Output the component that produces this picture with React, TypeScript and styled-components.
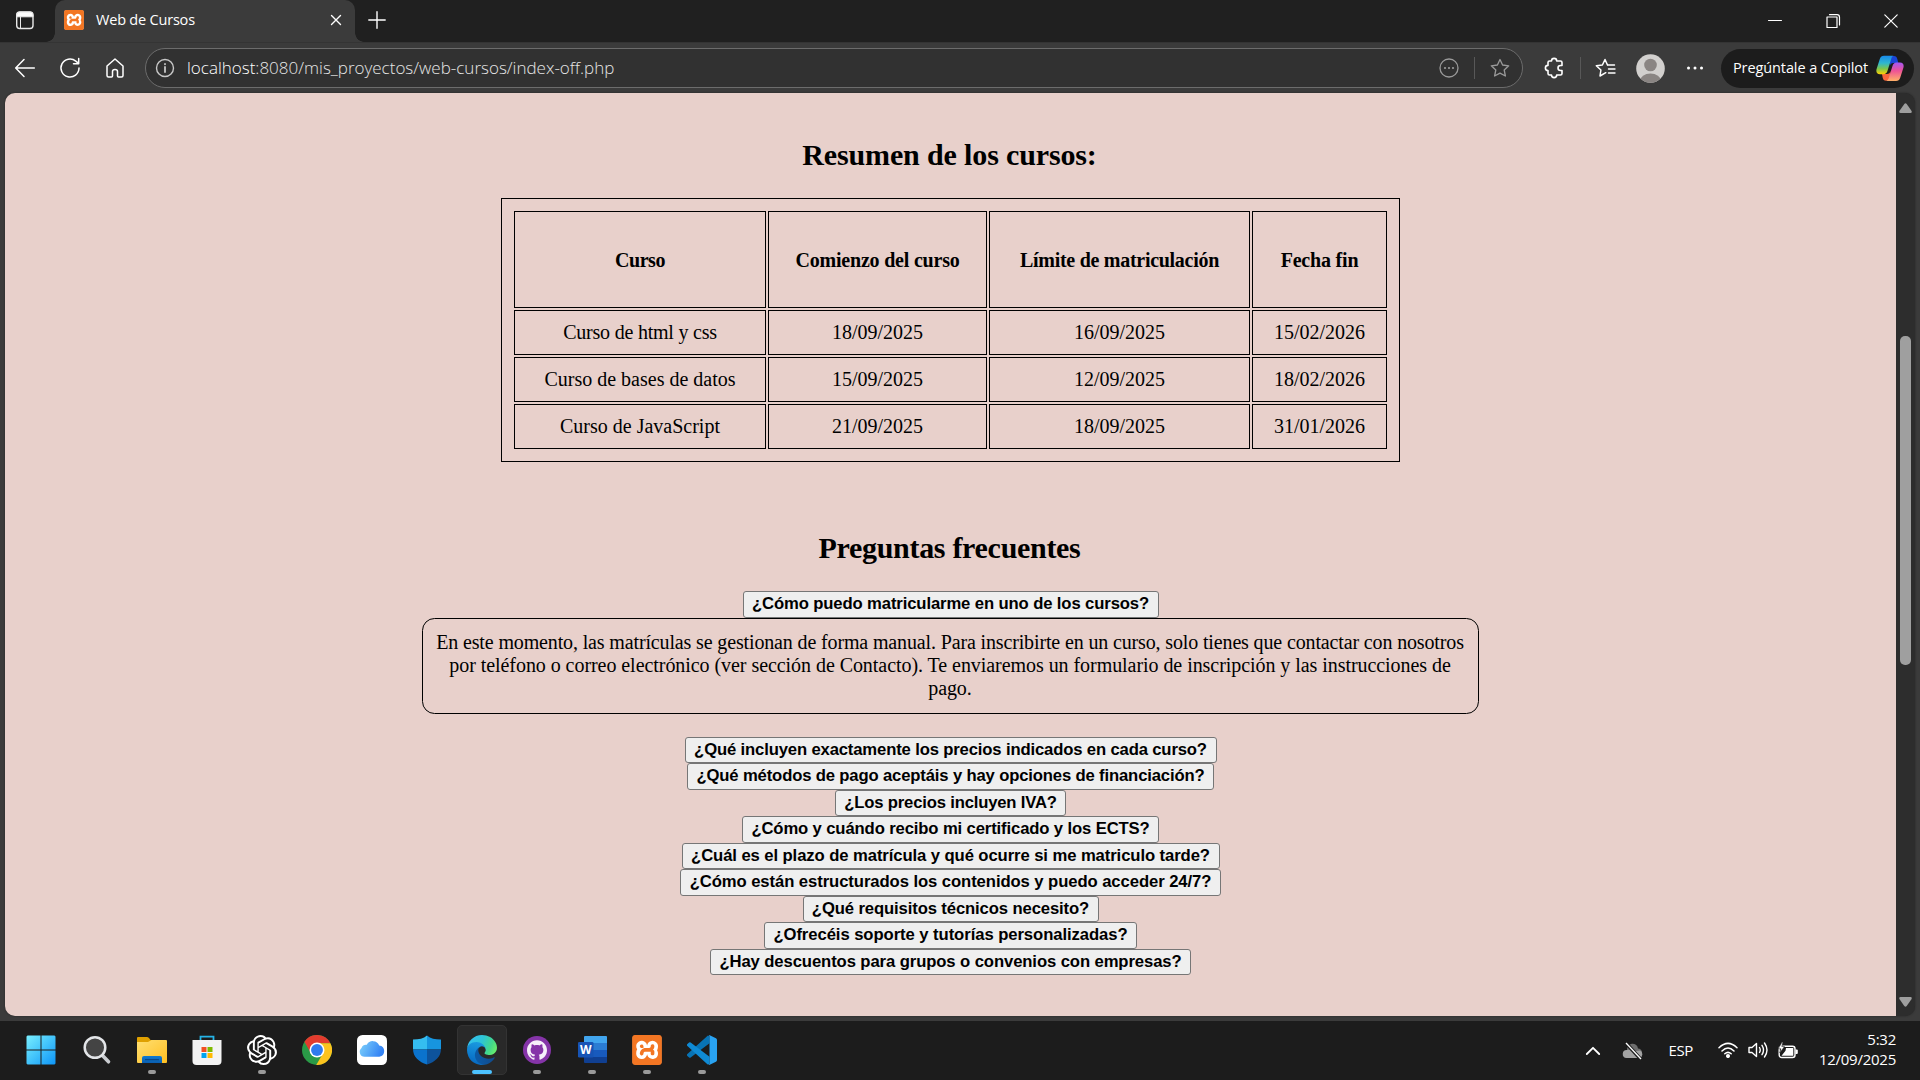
import React from 'react';
import styled, { createGlobalStyle, css } from 'styled-components';
import { SiGithub, SiOpenai, SiXampp } from 'react-icons/si';

const GlobalStyle = createGlobalStyle`
  * { box-sizing: border-box; }
  html, body { margin: 0; padding: 0; background: #3b3b3b; overflow: hidden; }
  svg { display: block; flex: none; }
`;

const uiFont = "'Open Sans', 'Noto Sans', sans-serif";
const serif = "'Liberation Serif', 'Times New Roman', serif";

const Screen = styled.div`
  width: 1920px;
  height: 1080px;
  display: flex;
  flex-direction: column;
  background: #3b3b3b;
  overflow: hidden;
`;

/* ---------- Browser chrome ---------- */

const TitleBar = styled.header`
  height: 42px;
  display: flex;
  align-items: stretch;
  background: #202020;
  color: #fff;
`;

const TabActions = styled.div`
  width: 55px;
  padding: 11px 0 0 15px;
`;

const Tab = styled.div`
  position: relative;
  width: 300px;
  display: flex;
  align-items: center;
  padding: 0 13px 2px 9px;
  background: #3b3b3b;
  border-radius: 10px 10px 0 0;
  &::before,
  &::after {
    content: '';
    position: absolute;
    bottom: 0;
    width: 9px;
    height: 9px;
  }
  &::before {
    left: -9px;
    background: radial-gradient(circle at 0 0, #202020 8.5px, #3b3b3b 9px);
  }
  &::after {
    right: -9px;
    background: radial-gradient(circle at 100% 0, #202020 8.5px, #3b3b3b 9px);
  }
`;

const TabTitle = styled.span`
  flex: 1;
  margin-left: 12px;
  padding-bottom: 1px;
  font: 400 14.5px/20px ${uiFont};
  letter-spacing: -0.2px;
`;

const NewTab = styled.div`
  padding: 11px 0 0 13px;
`;

const WindowControls = styled.div`
  display: flex;
  align-items: center;
  gap: 42px;
  margin-left: auto;
  padding: 0 21px 0 0;
`;

const Toolbar = styled.nav`
  height: 51px;
  display: flex;
  align-items: center;
  padding: 0 6px 0 14px;
  border-top: 1px solid #343434;
`;

const NavButtons = styled.div`
  display: flex;
  gap: 23px;
  width: 131px;
`;

const AddressBar = styled.div`
  width: 1378px;
  height: 40px;
  display: flex;
  align-items: center;
  padding: 0 12px 0 9px;
  background: #313131;
  border: 1px solid #6c6c6c;
  border-radius: 20px;
`;

const Url = styled.span`
  flex: 1;
  margin-left: 12px;
  color: #e6e6e6;
  font: 300 17px/24px ${uiFont};
`;

const Host = styled.span`
  color: #fff;
`;

const Divider = styled.span<{ $gap?: number }>`
  width: 1px;
  height: 22px;
  margin: 0 ${(p) => p.$gap ?? 15}px;
  background: #585858;
`;

const ToolActions = styled.div`
  display: flex;
  align-items: center;
  margin-left: 20px;
`;

const Avatar = styled.div`
  margin: 0 21px 0 20px;
`;

const CopilotButton = styled.div`
  display: flex;
  align-items: center;
  justify-content: space-between;
  width: 193px;
  height: 39px;
  margin-left: auto;
  padding: 0 10px 0 12px;
  border-radius: 20px;
  background: #1c1c1c;
  color: #fff;
  font: 400 14.5px/20px ${uiFont};
  letter-spacing: -0.1px;
`;

/* ---------- Web page ---------- */

const Viewport = styled.div`
  display: flex;
  width: 1910px;
  height: 923px;
  margin-left: 5px;
  border-radius: 10px;
  overflow: hidden;
  background: #2d2d2d;
  box-shadow: 0 0 2px #222;
`;

const Page = styled.main`
  width: 1891px;
  display: flex;
  flex-direction: column;
  align-items: center;
  background: #e8d0cb;
  color: #000;
  font-family: ${serif};
  font-size: 20px;
`;

const Heading = styled.h2<{ $top: number; $tracking: number }>`
  margin: ${(p) => p.$top}px 0 0;
  padding-right: 2px;
  font-size: 30px;
  line-height: 34px;
  font-weight: bold;
  letter-spacing: ${(p) => p.$tracking}px;
`;

const CourseTable = styled.table`
  width: 899px;
  height: 264px;
  margin: 26px 0 0;
  padding: 10px;
  border: 1px solid #000;
  border-collapse: separate;
  border-spacing: 2px;
  table-layout: fixed;
  text-align: center;
`;

const cell = css<{ $tracking?: number }>`
  padding: 0;
  border: 1px solid #000;
  line-height: 23px;
  letter-spacing: ${(p) => p.$tracking ?? 0}px;
`;

const HeadCell = styled.th<{ $tracking?: number; $width: number }>`
  ${cell}
  padding-top: 1px;
  width: ${(p) => p.$width}px;
  height: 97px;
`;

const Cell = styled.td<{ $tracking?: number }>`
  ${cell}
  height: 45px;
`;

const QuestionButton = styled.button<{ $width: number; $tracking: number }>`
  display: block;
  width: ${(p) => p.$width}px;
  height: 26.5px;
  padding: 0;
  border: 1px solid #767676;
  border-radius: 3px;
  background: #efefef;
  color: #000;
  font: bold 16.667px/20px 'Liberation Sans', Arial, sans-serif;
  letter-spacing: ${(p) => p.$tracking}px;
  white-space: nowrap;
  text-align: center;
`;

const Faq = styled.section`
  display: flex;
  flex-direction: column;
  align-items: center;
  margin-top: 26px;
`;

const Answer = styled.div`
  width: 1057px;
  height: 96px;
  margin-bottom: 23px;
  padding: 12px 1px 0 0;
  border: 1px solid #000;
  border-radius: 12.5px;
  text-align: center;
`;

const AnswerLine = styled.span<{ $tracking: number }>`
  display: block;
  line-height: 23.2px;
  white-space: nowrap;
  letter-spacing: ${(p) => p.$tracking}px;
`;

const Scrollbar = styled.div`
  width: 19px;
  display: flex;
  flex-direction: column;
  align-items: center;
  padding: 10px 1px 9px 0;
`;

const Thumb = styled.div`
  width: 11px;
  height: 329px;
  margin: 223px 0 auto;
  border-radius: 5px;
  background: #9f9f9f;
`;

/* ---------- Taskbar ---------- */

const Taskbar = styled.footer`
  display: flex;
  height: 59px;
  margin-top: auto;
  padding: 0 24px 0 13px;
  background: #1c1c1c;
  color: #fff;
`;

const AppSlot = styled.div`
  width: 55px;
  display: flex;
  justify-content: center;
  padding-top: 4px;
  &:first-child {
    width: 56px;
  }
`;

const AppTile = styled.div<{ $active?: boolean }>`
  width: 50px;
  height: 50px;
  display: flex;
  flex-direction: column;
  align-items: center;
  justify-content: space-between;
  padding: 9px 0 0;
  border: 1px solid ${(p) => (p.$active ? '#333' : 'transparent')};
  border-radius: 5px;
  background: ${(p) => (p.$active ? '#292929' : 'transparent')};
`;

const Indicator = styled.i<{ $state: 'none' | 'open' | 'active' }>`
  height: 4px;
  width: ${(p) => (p.$state === 'active' ? 20 : 8)}px;
  border-radius: 2px;
  background: ${(p) => ({ none: 'transparent', open: '#9a9a9a', active: '#4cc2ff' })[p.$state]};
`;

const Tray = styled.div`
  display: flex;
  align-items: center;
  margin-left: auto;
  font: 400 15px/20px ${uiFont};
`;

const HiddenIcons = styled.div`
  display: flex;
  align-items: center;
  gap: 21px;
`;

const Language = styled.span`
  margin: 0 25px 2px 25px;
  letter-spacing: -0.4px;
`;

const StatusIcons = styled.div`
  display: flex;
  gap: 10px;
`;

const Clock = styled.div`
  width: 98px;
  padding-bottom: 4px;
  text-align: right;
  letter-spacing: -0.25px;
`;

/* ---------- Icons ---------- */

const Line = ({ w, h, sw = 1.5, color = '#fff', children }: { w: number; h: number; sw?: number; color?: string; children: React.ReactNode }) => (
  <svg width={w} height={h} viewBox={`0 0 ${w} ${h}`} fill="none" stroke={color} strokeWidth={sw} strokeLinecap="round" strokeLinejoin="round">
    {children}
  </svg>
);

const XamppIcon = ({ size }: { size: number }) => (
  <svg width={size} height={size} viewBox="0 0 24 24">
    <rect x="0.6" y="0.6" width="22.8" height="22.8" rx="1.5" fill="#fff" />
    <SiXampp size={24} color="#f37623" />
  </svg>
);

const star = 'M10 1.5 L12.6 7 L18.7 7.8 L14.2 12 L15.4 18 L10 15.1 L4.6 18 L5.8 12 L1.3 7.8 L7.4 7 Z';

const CopilotIcon = () => (
  <svg width="28" height="27" viewBox="0 0 28 27">
    <defs>
      <linearGradient id="cpA" x1="0" y1="0" x2="0" y2="1">
        <stop offset="0.05" stopColor="#1b8fe8" />
        <stop offset="0.4" stopColor="#2fb7cf" />
        <stop offset="0.7" stopColor="#7cc64e" />
        <stop offset="1" stopColor="#ffd000" />
      </linearGradient>
      <linearGradient id="cpB" x1="0" y1="0" x2="0" y2="1">
        <stop offset="0" stopColor="#a556f3" />
        <stop offset="0.45" stopColor="#ee5396" />
        <stop offset="1" stopColor="#ffb067" />
      </linearGradient>
    </defs>
    <path d="M14 1h4c2 0 2.800 1.200 3.300 3l1 4h-5c-2 0-3 1-3.500 3z" fill="#1a45d6" />
    <path d="M14 25.800h-4c-2 0-2.800-1.200-3.300-3L6 19h5c2 0 3-1 3.600-3z" fill="#f8643c" />
    <path d="M8 .8h9.500c-1.300.6-1.900 1.700-2.400 3.400L11.600 15.500C10.800 18 9.600 19.200 7.500 19.200H4C.9 19.200-.2 16.800.6 14L3.800 4C4.600 1.800 5.800.8 8 .8z" fill="url(#cpA)" />
    <path d="M20 26h-9.500c1.300-.6 1.900-1.700 2.400-3.400l3.500-11.300c.8-2.500 2-3.700 4.100-3.700H24c3.100 0 4.200 2.400 3.400 5.200l-3.200 10C23.400 25 22.200 26 20 26z" fill="url(#cpB)" />
  </svg>
);

const WindowsIcon = () => (
  <svg width="30" height="30" viewBox="0 0 30 30">
    <defs>
      <linearGradient id="win" x1="0" y1="0" x2="30" y2="30" gradientUnits="userSpaceOnUse">
        <stop stopColor="#7bf0ff" />
        <stop offset="0.5" stopColor="#42c3fb" />
        <stop offset="1" stopColor="#0c93f7" />
      </linearGradient>
    </defs>
    <path fill="url(#win)" d="M1.500.5h13v14h-14v-13zM15.500.5h13l1 1v13h-14zM.5 15.500h14v14h-13l-1-1zM15.500 15.500h14v13l-1 1h-13z" />
  </svg>
);

const SearchIcon = () => (
  <svg width="30" height="30" viewBox="0 0 30 30">
    <path d="M20.500 20.500 26.500 26.800" stroke="#c9ccd0" strokeWidth="3.600" strokeLinecap="round" />
    <circle cx="13" cy="12.500" r="10.300" fill="#444" stroke="#e3e5e8" strokeWidth="2.500" />
  </svg>
);

const FolderIcon = () => (
  <svg width="30" height="30" viewBox="0 0 30 30">
    <defs>
      <linearGradient id="fold" x1="0" y1="0" x2="1" y2="1">
        <stop stopColor="#ffdf72" />
        <stop offset="1" stopColor="#ffbf21" />
      </linearGradient>
      <linearGradient id="foldB" x1="0" y1="0" x2="0" y2="1">
        <stop stopColor="#0f7ad0" />
        <stop offset="1" stopColor="#0a5eb0" />
      </linearGradient>
    </defs>
    <path d="M0 3Q0 2 1 2H10Q11 2 12 3L13.500 5H28V10H0Z" fill="#dfa000" />
    <path d="M0 7H11L14.500 5H29Q30 5 30 6V27Q30 28 29 28H1Q0 28 0 27Z" fill="url(#fold)" />
    <path d="M5 28V23Q5 21 7 21H23Q25 21 25 23V28Z" fill="url(#foldB)" />
    <path d="M8 24.700H22" stroke="#083f7d" strokeWidth="1" />
  </svg>
);

const StoreIcon = () => (
  <svg width="30" height="30" viewBox="0 0 30 30">
    <path d="M8.500 6V1.700H21.500V6" fill="none" stroke="#25b3e6" strokeWidth="1.800" />
    <path d="M.5 5H29.500V26Q29.500 30 25.500 30H4.500Q.5 30 .5 26Z" fill="#f3f3f3" />
    <path d="M9.500 12h5v5h-5z" fill="#f25022" />
    <path d="M15.500 12h5v5h-5z" fill="#7fba00" />
    <path d="M9.500 18h5v5h-5z" fill="#00a4ef" />
    <path d="M15.500 18h5v5h-5z" fill="#ffb900" />
  </svg>
);

const ChromeIcon = () => (
  <svg width="30" height="30" viewBox="2 2 44 44">
    <circle cx="24" cy="24" r="22" fill="#2a9a47" />
    <path d="M24 14H43.600A22 22 0 0 0 5.540 12.030L15.340 29A10 10 0 0 1 24 14Z" fill="#e33b2e" />
    <path d="M24 14H43.600A22 22 0 0 1 22.860 45.970L32.660 29A10 10 0 0 0 24 14Z" fill="#fcc31e" />
    <circle cx="24" cy="24" r="11" fill="#fff" />
    <circle cx="24" cy="24" r="8.700" fill="#2f7bee" />
  </svg>
);

const CloudIcon = () => (
  <svg width="30" height="30" viewBox="0 0 30 30">
    <defs>
      <linearGradient id="icl" x1="0" y1="0" x2="1" y2="0.3">
        <stop stopColor="#7fd3fb" />
        <stop offset="1" stopColor="#3484f5" />
      </linearGradient>
    </defs>
    <rect width="30" height="30" rx="5.500" fill="#fff" />
    <path d="M7.500 21.800A5 5 0 0 1 4.500 13 5 5 0 0 1 9.800 9.800 6.800 6.800 0 0 1 22.200 10.500 5.700 5.700 0 0 1 22.300 21.800Z" fill="url(#icl)" />
  </svg>
);

const ShieldIcon = () => (
  <svg width="30" height="30" viewBox="0 0 30 30">
    <defs>
      <clipPath id="sh">
        <path d="M15 .5C18.500 3.500 23 4.500 29 4.500V14C29 22 23 27 15 29.500 7 27 1 22 1 14V4.500C7 4.500 11.500 3.500 15 .5Z" />
      </clipPath>
    </defs>
    <g clipPath="url(#sh)">
      <path d="M0 0h15v14.500H0z" fill="#35bdf0" />
      <path d="M15 0h15v14.500H15z" fill="#1795df" />
      <path d="M0 14.500h15V30H0z" fill="#0b73cd" />
      <path d="M15 14.500h15V30H15z" fill="#0d539c" />
    </g>
  </svg>
);

const EdgeIcon = () => (
  <svg width="30" height="30" viewBox="0 0 256 256">
    <defs>
      <linearGradient id="edA" x1="0.2" y1="0" x2="1" y2="0">
        <stop stopColor="#0c59a4" />
        <stop offset="1" stopColor="#114a8b" />
      </linearGradient>
      <linearGradient id="edB" x1="0.6" y1="0" x2="0.4" y2="1">
        <stop stopColor="#1b9de2" />
        <stop offset="1" stopColor="#0667c0" />
      </linearGradient>
      <linearGradient id="edC" x1="0" y1="0.3" x2="1" y2="0.6">
        <stop stopColor="#35c1f1" />
        <stop offset="0.45" stopColor="#2ec4d6" />
        <stop offset="0.8" stopColor="#43d98a" />
        <stop offset="1" stopColor="#66eb6e" />
      </linearGradient>
    </defs>
    <path fill="url(#edA)" d="M231 190.500c-3.400 1.800-6.900 3.400-10.500 4.700a101.500 101.500 0 0 1-35.900 6.500c-47.300 0-88.500-32.500-88.500-74.300a31.500 31.500 0 0 1 16.400-27.300c-42.800 1.800-53.800 46.400-53.800 72.500 0 74 68.100 81.400 82.800 81.400 7.900 0 19.800-2.300 27-4.600l1.300-.4a128.300 128.300 0 0 0 66.600-52.800 4 4 0 0 0-5.400-5.700z" />
    <path fill="url(#edB)" d="M105.700 241.400a79.200 79.200 0 0 1-22.700-21.300 80.700 80.700 0 0 1 29.500-120c3.200-1.500 8.500-4.100 15.600-4a32.400 32.400 0 0 1 25.700 13 31.900 31.900 0 0 1 6.300 18.700c0-.2 24.500-79.600-80-79.600-43.900 0-80 41.600-80 78.200a130.200 130.200 0 0 0 12.100 56 128 128 0 0 0 156.400 67 75.500 75.500 0 0 1-62.800-8z" />
    <path fill="url(#edC)" d="M152.300 148.900c-.9 1-3.400 2.500-3.400 5.600 0 2.600 1.700 5.200 4.800 7.300 14.300 10 41.400 8.600 41.500 8.600a59.600 59.600 0 0 0 30.300-8.300 61.400 61.400 0 0 0 30.400-52.900c.3-22.400-8-37.300-11.300-43.900C223.500 23.900 177.700 0 128 0A128 128 0 0 0 0 126.200c.5-36.500 36.800-66 80-66 3.500 0 23.500.3 42 10a72.600 72.600 0 0 1 30.900 29.300c6.100 10.600 7.200 24.100 7.200 29.500 0 5.400-2.700 13.300-7.800 19.900z" />
  </svg>
);

const GithubIcon = () => (
  <svg width="30" height="30" viewBox="0 0 30 30">
    <circle cx="15" cy="15" r="14" fill="#8534a8" />
    <svg x="5" y="5" width="20" height="20">
      <SiGithub size={20} color="#f6f0fa" />
    </svg>
  </svg>
);

const WordLetter = styled.text`
  font: bold 12px 'Open Sans', sans-serif;
  fill: #fff;
`;

const WordIcon = () => (
  <svg width="30" height="30" viewBox="0 0 30 30">
    <path d="M8 1h21q1 0 1 1v6H7V2q0-1 1-1z" fill="#41a5ee" />
    <path d="M7 8h23v7H7z" fill="#2b7cd3" />
    <path d="M7 15h23v7H7z" fill="#185abd" />
    <path d="M7 22h23v5q0 1-1 1H8q-1 0-1-1z" fill="#103f91" />
    <rect x="1" y="7" width="15.500" height="15.500" rx="1.300" fill="#1754b5" />
    <WordLetter x="8.800" y="19" textAnchor="middle">W</WordLetter>
  </svg>
);

const VsCodeIcon = () => (
  <svg width="30" height="30" viewBox="0 0 24 24">
    <path d="M.326 16.739 1.650 17.940a1 1 0 0 0 1.276.057L18.004 6.552 18 1 16.505.5 .326 15.260a1 1 0 0 0 0 1.479z" fill="#0873b4" />
    <path d="M.326 7.261 1.650 6.060a1 1 0 0 1 1.276-.057L18.004 17.448 18 23 16.505 23.500 .326 8.740a1 1 0 0 1 0-1.479z" fill="#0f8ad4" />
    <path d="M23.150 2.587 18.210.21a1.494 1.494 0 0 0-1.705.29C17.100 0 18.004.4 18.004 1.300V22.700c0 .9-.9 1.300-1.500.8a1.492 1.492 0 0 0 1.704.29l4.942-2.377A1.500 1.500 0 0 0 24 20.060V3.939a1.500 1.500 0 0 0-.85-1.352z" fill="#29a3f2" />
  </svg>
);

/* ---------- Data ---------- */

const headers = [
  { text: 'Curso', width: 252, tracking: -0.45 },
  { text: 'Comienzo del curso', width: 219, tracking: -0.2 },
  { text: 'Límite de matriculación', width: 261, tracking: -0.28 },
  { text: 'Fecha fin', width: 135, tracking: -0.2 },
];

const courses = [
  { name: 'Curso de html y css', tracking: -0.22, dates: ['18/09/2025', '16/09/2025', '15/02/2026'] },
  { name: 'Curso de bases de datos', tracking: 0, dates: ['15/09/2025', '12/09/2025', '18/02/2026'] },
  { name: 'Curso de JavaScript', tracking: 0, dates: ['21/09/2025', '18/09/2025', '31/01/2026'] },
];

const questions = [
  { text: '¿Qué incluyen exactamente los precios indicados en cada curso?', width: 532, tracking: -0.15 },
  { text: '¿Qué métodos de pago aceptáis y hay opciones de financiación?', width: 527, tracking: -0.155 },
  { text: '¿Los precios incluyen IVA?', width: 231, tracking: -0.18 },
  { text: '¿Cómo y cuándo recibo mi certificado y los ECTS?', width: 417, tracking: -0.13 },
  { text: '¿Cuál es el plazo de matrícula y qué ocurre si me matriculo tarde?', width: 538, tracking: -0.09 },
  { text: '¿Cómo están estructurados los contenidos y puedo acceder 24/7?', width: 541, tracking: -0.08 },
  { text: '¿Qué requisitos técnicos necesito?', width: 296, tracking: -0.12 },
  { text: '¿Ofrecéis soporte y tutorías personalizadas?', width: 373, tracking: -0.07 },
  { text: '¿Hay descuentos para grupos o convenios con empresas?', width: 481, tracking: -0.1 },
];

const apps: { id: string; icon: React.ReactNode; state: 'none' | 'open' | 'active' }[] = [
  { id: 'start', icon: <WindowsIcon />, state: 'none' },
  { id: 'search', icon: <SearchIcon />, state: 'none' },
  { id: 'files', icon: <FolderIcon />, state: 'open' },
  { id: 'store', icon: <StoreIcon />, state: 'none' },
  { id: 'chatgpt', icon: <SiOpenai size={30} color="#fff" />, state: 'open' },
  { id: 'chrome', icon: <ChromeIcon />, state: 'none' },
  { id: 'icloud', icon: <CloudIcon />, state: 'none' },
  { id: 'security', icon: <ShieldIcon />, state: 'none' },
  { id: 'edge', icon: <EdgeIcon />, state: 'active' },
  { id: 'github', icon: <GithubIcon />, state: 'open' },
  { id: 'word', icon: <WordIcon />, state: 'open' },
  { id: 'xampp', icon: <XamppIcon size={30} />, state: 'open' },
  { id: 'vscode', icon: <VsCodeIcon />, state: 'open' },
];

export default function App() {
  return (
    <Screen>
      <GlobalStyle />
      <TitleBar>
        <TabActions>
          <svg width="20" height="19" viewBox="0 0 20 19">
            <rect x="1.700" y="1" width="16.300" height="16.500" rx="3" fill="none" stroke="#e8e8e8" strokeWidth="1.400" />
            <path d="M1.700 5.800V4a3 3 0 0 1 3-3H15a3 3 0 0 1 3 3v1.800zM5.500 5v12.500" fill="#fff" stroke="#e8e8e8" strokeWidth="1" />
          </svg>
        </TabActions>
        <Tab>
          <XamppIcon size={20} />
          <TabTitle>Web de Cursos</TabTitle>
          <Line w={12} h={12} sw={1.4}><path d="M1.500 1.500l9 9M10.500 1.500l-9 9" /></Line>
        </Tab>
        <NewTab>
          <Line w={18} h={18} sw={1.4}><path d="M9 .8v16.400M.8 9h16.400" /></Line>
        </NewTab>
        <WindowControls>
          <Line w={16} h={16} sw={1}><path d="M1.500 7.500h13" /></Line>
          <Line w={16} h={16} sw={1.2}><path d="M2 4h10v10.500H2zM4.500 1.700H12a2.500 2.500 0 0 1 2.500 2.500V12" /></Line>
          <Line w={16} h={16} sw={1.2}><path d="M1.800 1.800l12.400 12.400M14.200 1.800L1.800 14.200" /></Line>
        </WindowControls>
      </TitleBar>

      <Toolbar>
        <NavButtons>
          <Line w={22} h={22}><path d="M20.300 11H2M10 2.500L1.700 11l8.300 8.500" /></Line>
          <Line w={22} h={22}><path d="M20 11a9 9 0 1 1-3.200-6.900L19.500 6.300M19.700 1.500v5.200h-5.200" /></Line>
          <Line w={22} h={22}><path d="M11 2L3 9v9.500q0 1.500 1.500 1.500h3q1 0 1-1v-4.500q0-2 2.500-2t2.500 2V19q0 1 1 1h3q1.500 0 1.500-1.500V9z" /></Line>
        </NavButtons>
        <AddressBar>
          <Line w={20} h={20} color="#c8c8c8" sw={1.4}>
            <circle cx="10" cy="10" r="8.500" />
            <path d="M10 9v5M10 6v.3" strokeWidth="1.800" />
          </Line>
          <Url><Host>localhost</Host>:8080/mis_proyectos/web-cursos/index-off.php</Url>
          <Line w={20} h={20} color="#9a9a9a" sw={1.3}>
            <circle cx="10" cy="10" r="9" />
            <path d="M6 10h.01M10 10h.01M14 10h.01" strokeWidth="2.200" />
          </Line>
          <Divider />
          <Line w={20} h={20} color="#9a9a9a" sw={1.3}><path d={star} /></Line>
        </AddressBar>
        <ToolActions>
          <Line w={22} h={22} sw={1.6}>
            <path d="M8.500 4a2.600 2.600 0 0 1 5.200 0H17.500q1.500 0 1.500 1.500V8.500H17.500a2.500 2.500 0 0 0 0 5H19V16.500q0 1.500-1.500 1.500H13.700a2.600 2.600 0 0 1-5.200 0H6.500q-1.500 0-1.500-1.500V13.600a2.600 2.600 0 0 1 0-5.200V5.500q0-1.500 1.500-1.500z" />
          </Line>
          <Divider $gap={14.5} />
          <Line w={21} h={20} sw={1.5}>
            <path d="M12.500 7H19.500M13.500 11H20M13.500 15H20" strokeWidth="1.400" />
            <path d="M10.800 14.700 5 18l.9-6L1.300 7.800 7.400 7 10 1.500 12.400 6.800" />
          </Line>
          <Avatar>
            <svg width="29" height="29" viewBox="0 0 29 29">
              <defs><clipPath id="av"><circle cx="14.500" cy="14.500" r="14.300" /></clipPath></defs>
              <g clipPath="url(#av)">
                <path d="M0 0h29v29H0z" fill="#d2d0ce" />
                <circle cx="14.500" cy="11" r="6.300" fill="#8a8583" />
                <ellipse cx="14.500" cy="27" rx="10.500" ry="7.500" fill="#8a8583" />
              </g>
            </svg>
          </Avatar>
          <Line w={18} h={18} sw={3}><path d="M2.500 9h.01M9 9h.01M15.500 9h.01" /></Line>
        </ToolActions>
        <CopilotButton>
          Pregúntale a Copilot
          <CopilotIcon />
        </CopilotButton>
      </Toolbar>

      <Viewport>
        <Page>
          <Heading $top={45} $tracking={-0.14}>Resumen de los cursos:</Heading>
          <CourseTable>
            <thead>
              <tr>
                {headers.map((h) => (
                  <HeadCell key={h.text} $width={h.width} $tracking={h.tracking}>{h.text}</HeadCell>
                ))}
              </tr>
            </thead>
            <tbody>
              {courses.map((c) => (
                <tr key={c.name}>
                  <Cell $tracking={c.tracking}>{c.name}</Cell>
                  {c.dates.map((d) => <Cell key={d}>{d}</Cell>)}
                </tr>
              ))}
            </tbody>
          </CourseTable>
          <Heading $top={69} $tracking={-0.3}>Preguntas frecuentes</Heading>
          <Faq>
            <QuestionButton $width={416} $tracking={-0.12}>¿Cómo puedo matricularme en uno de los cursos?</QuestionButton>
            <Answer>
              <AnswerLine $tracking={-0.14}>En este momento, las matrículas se gestionan de forma manual. Para inscribirte en un curso, solo tienes que contactar con nosotros</AnswerLine>
              <AnswerLine $tracking={-0.055}>por teléfono o correo electrónico (ver sección de Contacto). Te enviaremos un formulario de inscripción y las instrucciones de</AnswerLine>
              <AnswerLine $tracking={-0.1}>pago.</AnswerLine>
            </Answer>
            {questions.map((q) => (
              <QuestionButton key={q.text} $width={q.width} $tracking={q.tracking}>{q.text}</QuestionButton>
            ))}
          </Faq>
        </Page>
        <Scrollbar>
          <svg width="13" height="10" viewBox="0 0 13 10"><path d="M5.300 1Q6.500-.5 7.700 1L12.600 8Q13.200 10 11.500 10H1.500Q-.2 10 .4 8Z" fill="#9f9f9f" /></svg>
          <Thumb />
          <svg width="13" height="10" viewBox="0 0 13 10"><path d="M5.300 9Q6.500 10.500 7.700 9L12.600 2Q13.200 0 11.500 0H1.500Q-.2 0 .4 2Z" fill="#9f9f9f" /></svg>
        </Scrollbar>
      </Viewport>

      <Taskbar>
        {apps.map((a) => (
          <AppSlot key={a.id}>
            <AppTile $active={a.state === 'active'}>
              {a.icon}
              <Indicator $state={a.state} />
            </AppTile>
          </AppSlot>
        ))}
        <Tray>
          <HiddenIcons>
            <Line w={16} h={16} sw={1.8}><path d="M1.800 11L8 4.800 14.200 11" /></Line>
            <svg width="22" height="18" viewBox="0 0 22 18">
              <path d="M5 8a5.500 5.500 0 0 1 11-1.500A4.500 4.500 0 0 1 20 10L5 11z" fill="#6d6d6d" />
              <path d="M4.500 16A4 4 0 0 1 5 8Q8 7 10.500 9.500L18 8.500A4 4 0 0 1 17.500 16z" fill="#a3a3a3" />
              <path d="M4 1l14.500 16" stroke="#1c1c1c" strokeWidth="3.500" />
              <path d="M4 1l15 16" stroke="#fff" strokeWidth="1.300" />
            </svg>
          </HiddenIcons>
          <Language>ESP</Language>
          <StatusIcons>
            <Line w={20} h={16} sw={1.5}>
              <path d="M1 5.800Q10-3 19 5.800M4 9Q10 3 16 9M6.800 11.800Q10 9 13.200 11.800" />
              <circle cx="10" cy="14" r="1.300" fill="#fff" />
            </Line>
            <Line w={20} h={16} sw={1.4}>
              <path d="M1 5.500h3L8.500 1.500v13L4 10.500H1zM11.500 5.500q1.500 2.500 0 5M14 3.300q3 4.700 0 9.400M16.500 1q5 7 0 14" />
            </Line>
            <svg width="20" height="18" viewBox="0 0 20 18">
              <rect x="1.200" y="4.200" width="15.800" height="11.300" rx="2.500" fill="none" stroke="#fff" strokeWidth="1.400" />
              <path d="M8 6h7.300v7.800H3.500l4-5z" fill="#fff" />
              <path d="M17.500 7.500h1.300q1 0 1 1v2.500q0 1-1 1h-1.300z" fill="#fff" />
              <path d="M4 0L.3 6.800h2.500L1.800 11 6.500 4.500H3.800L5 0z" fill="#fff" stroke="#1c1c1c" strokeWidth=".6" />
            </svg>
          </StatusIcons>
          <Clock>
            <div>5:32</div>
            <div>12/09/2025</div>
          </Clock>
        </Tray>
      </Taskbar>
    </Screen>
  );
}
